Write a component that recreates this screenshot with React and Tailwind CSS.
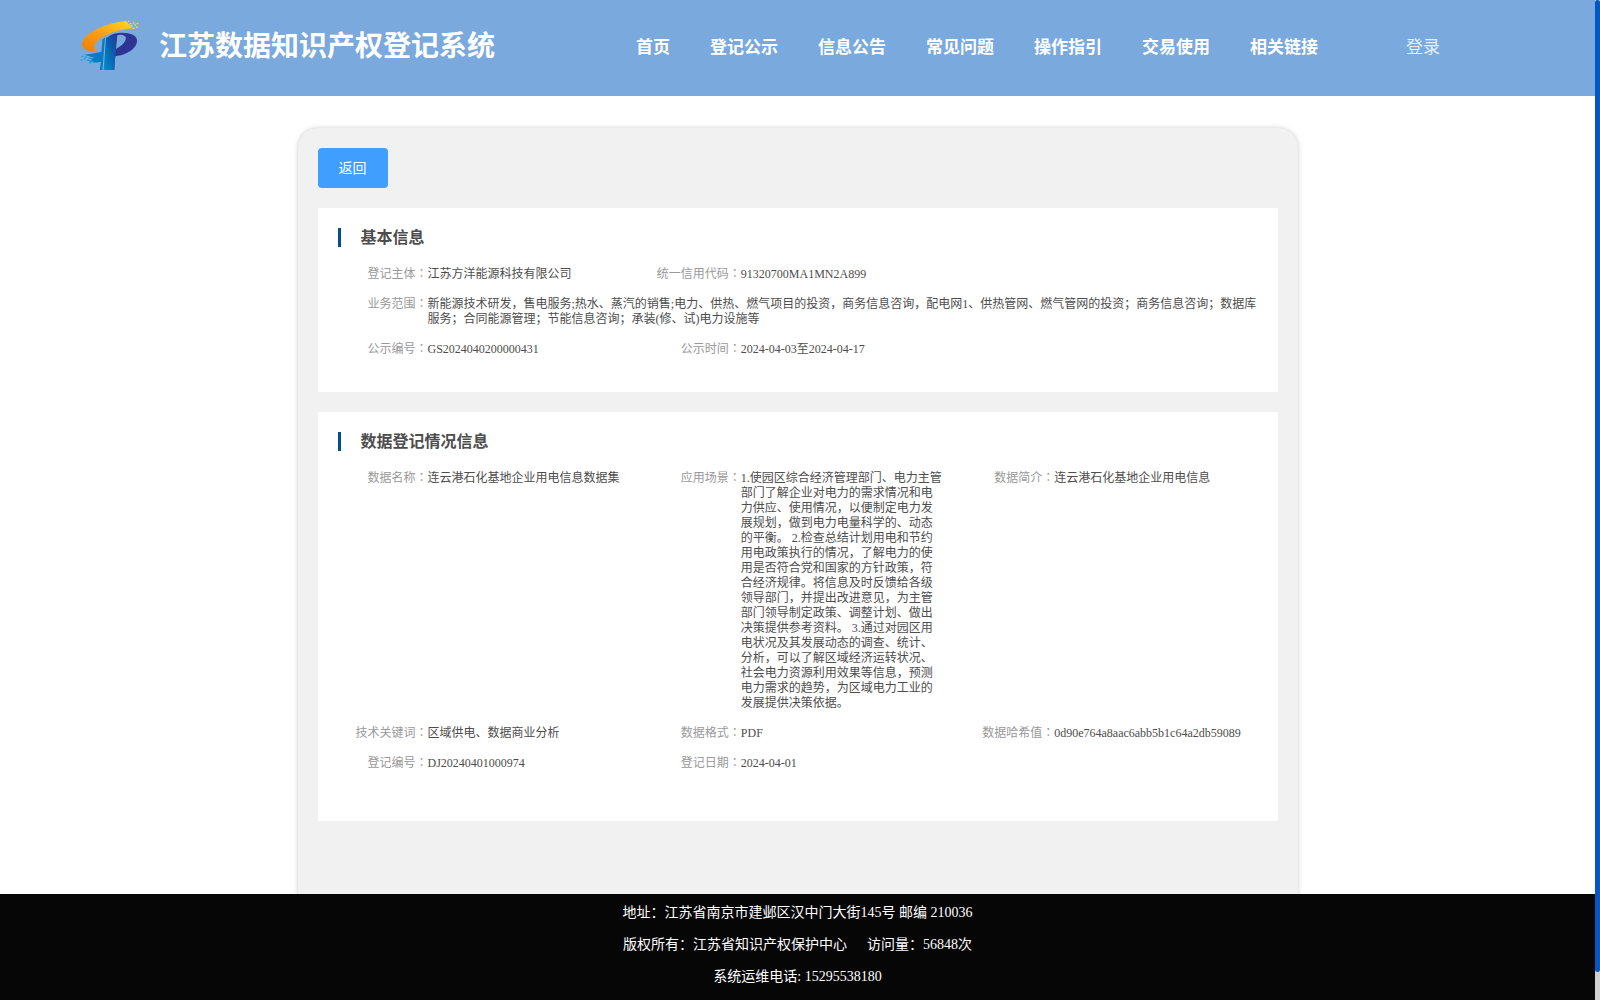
const NAV_ITEMS = ['首页', '登记公示', '信息公告', '常见问题', '操作指引', '交易使用', '相关链接'];

const BASIC_INFO = [
  { label: '登记主体', value: '江苏方洋能源科技有限公司' },
  { label: '统一信用代码', value: '91320700MA1MN2A899', span: 'col-span-2' },
  {
    label: '业务范围',
    value:
      '新能源技术研发，售电服务;热水、蒸汽的销售;电力、供热、燃气项目的投资，商务信息咨询，配电网1、供热管网、燃气管网的投资；商务信息咨询；数据库服务；合同能源管理；节能信息咨询；承装(修、试)电力设施等',
    span: 'col-span-3',
  },
  { label: '公示编号', value: 'GS2024040200000431' },
  { label: '公示时间', value: '2024-04-03至2024-04-17', span: 'col-span-2' },
];

const DATA_INFO = [
  { label: '数据名称', value: '连云港石化基地企业用电信息数据集' },
  {
    label: '应用场景',
    value:
      '1.使园区综合经济管理部门、电力主管部门了解企业对电力的需求情况和电力供应、使用情况，以便制定电力发展规划，做到电力电量科学的、动态的平衡。 2.检查总结计划用电和节约用电政策执行的情况，了解电力的使用是否符合党和国家的方针政策，符合经济规律。将信息及时反馈给各级领导部门，并提出改进意见，为主管部门领导制定政策、调整计划、做出决策提供参考资料。 3.通过对园区用电状况及其发展动态的调查、统计、分析，可以了解区域经济运转状况、社会电力资源利用效果等信息，预测电力需求的趋势，为区域电力工业的发展提供决策依据。',
  },
  { label: '数据简介', value: '连云港石化基地企业用电信息' },
  { label: '技术关键词', value: '区域供电、数据商业分析' },
  { label: '数据格式', value: 'PDF' },
  { label: '数据哈希值', value: '0d90e764a8aac6abb5b1c64a2db59089' },
  { label: '登记编号', value: 'DJ20240401000974' },
  { label: '登记日期', value: '2024-04-01' },
];

function Logo() {
  return (
    <svg viewBox="60 58 180 154" className="w-[60px] h-[51px] shrink-0">
      <defs>
        <linearGradient id="swoosh" x1="0" y1="1" x2="1" y2="0">
          <stop offset="0" stopColor="#f07c00" />
          <stop offset="0.5" stopColor="#f9a01b" />
          <stop offset="1" stopColor="#ffd91f" />
        </linearGradient>
        <linearGradient id="stem" x1="0" y1="1" x2="1" y2="0">
          <stop offset="0" stopColor="#0090cf" />
          <stop offset="0.6" stopColor="#0a5cad" />
          <stop offset="1" stopColor="#2b3990" />
        </linearGradient>
      </defs>
      <path d="M192 62C142 68 78 92 67 124C60 146 84 157 117 155C101 149 98 139 107 128C120 110 153 94 191 87L218 83L211 77L219 73L206 71L203 65Z" fill="url(#swoosh)" />
      <path d="M194 61h6v4h-6zM204 60h5v4h-5zM209 66h6v4h-6zM219 65h5v4h-5zM230 66h6v4h-6zM223 71h6v4h-6zM213 74h6v4h-6zM228 78h6v4h-6zM218 81h6v4h-6z" fill="#ffd51f" />
      <path d="M148 106C164 97 184 94 204 98C230 102 238 118 227 136C215 155 190 165 164 168L166 146C182 139 197 126 198 113C198 104 184 100 170 104L163 209H132Z" fill="#2e3492" />
      <path d="M138 112C148 105 160 103 172 103L166 168L162 209H131Z" fill="url(#stem)" />
      <path d="M127 118L135 111L127 209H119L123 184C108 188 96 187 84 181L99 179L87 174L104 173L72 163C84 162 101 160 124 154Z" fill="#087bc1" />
      <path d="M64 166h6v4h-6zM74 168h7v4h-7zM84 171h7v4h-7zM61 177h5v4h-5zM70 174h6v4h-6zM80 178h7v4h-7zM92 181h8v4h-8zM87 185h6v4h-6z" fill="#12a5df" />
    </svg>
  );
}

function Field({ label, value, span }) {
  return (
    <div className={`flex pb-[15px] pr-5 ${span || ''}`}>
      <div className="w-[90px] h-[15px] shrink-0 text-right whitespace-nowrap text-[#999]">
        {label}
        <span className="leading-[0] font-['Noto_Sans_CJK_TC',sans-serif]">：</span>
      </div>
      <div className="flex-1 min-w-0 text-[#4d4d4d]">{value}</div>
    </div>
  );
}

function InfoCard({ title, fields, height }) {
  return (
    <section className={`bg-white pt-5 pl-5 ${height}`}>
      <div className="flex items-center h-[19px] mb-5 border-l-[3px] border-[#00508e] pl-5">
        <h2 className="text-base leading-[19px] font-bold text-[#4d4d4d]">{title}</h2>
      </div>
      <div className="grid grid-cols-3 text-xs leading-[15px]">
        {fields.map((f) => (
          <Field key={f.label} {...f} />
        ))}
      </div>
    </section>
  );
}

export default function App() {
  return (
    <div className="flex w-[1600px] h-[1000px] overflow-hidden bg-white font-['Liberation_Serif','Noto_Sans_CJK_SC',serif]">
      <div className="w-[1595px] shrink-0 flex flex-col">
        <header className="h-24 shrink-0 bg-[#79a9dd] text-white flex items-center pl-20 pb-1.5">
          <Logo />
          <h1 className="ml-[19px] w-[477px] pt-[3px] text-[28px] leading-9 font-bold whitespace-nowrap">江苏数据知识产权登记系统</h1>
          <nav className="flex gap-10 text-[17px] leading-6 font-bold whitespace-nowrap pt-[5px]">
            {NAV_ITEMS.map((item) => (
              <a key={item}>{item}</a>
            ))}
          </nav>
          <a className="ml-[88px] pt-[5px] text-[17px] leading-6 text-white/80">登录</a>
        </header>

        <main className="flex-1 min-h-0 overflow-hidden pt-8">
          <div className="mx-auto w-[1000px] h-[800px] rounded-[20px] bg-[#f1f1f1] p-5 shadow-[0_0_5px_rgba(0,0,0,0.2)]">
            <button className="block w-[70px] h-10 pt-px rounded bg-[#409eff] text-white text-sm">返回</button>
            <div className="mt-5 flex flex-col gap-5">
              <InfoCard title="基本信息" fields={BASIC_INFO} height="h-[184px]" />
              <InfoCard title="数据登记情况信息" fields={DATA_INFO} height="h-[409px]" />
            </div>
          </div>
        </main>

        <footer className="h-[106px] shrink-0 bg-[#060606] text-white text-sm leading-8 text-center pt-[3px] whitespace-pre">
          <p>地址：江苏省南京市建邺区汉中门大街145号 邮编 210036</p>
          <p>
            版权所有：江苏省知识产权保护中心<span className="ml-5">访问量：56848次</span>
          </p>
          <p>系统运维电话: 15295538180</p>
        </footer>
      </div>

      {/* scrollbar */}
      <div className="w-[5px] bg-[#d0d0d0]">
        <div className="h-[972px] rounded-[3px] bg-[#0058c4]" />
      </div>
    </div>
  );
}
